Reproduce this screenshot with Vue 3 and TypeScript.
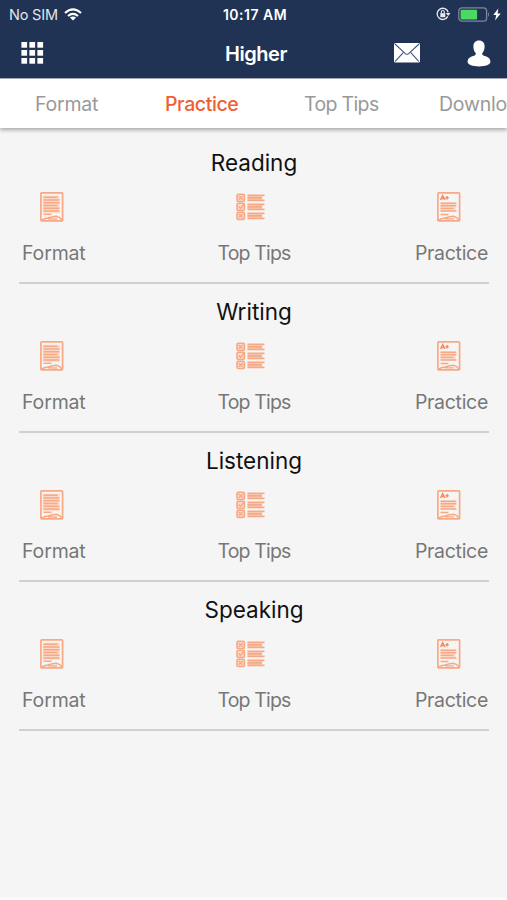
<script setup lang="ts">
interface Tab {
  label: string
  id: string
}

const tabs: Tab[] = [
  { label: 'Format', id: 'format' },
  { label: 'Practice', id: 'practice' },
  { label: 'Top Tips', id: 'tips' },
  { label: 'Downloads', id: 'downloads' },
]
const active = 'practice'
const sections: string[] = ['Reading', 'Writing', 'Listening', 'Speaking']
const cells = [0, 8, 16]
</script>

<template>
  <div class="screen">
    <header class="header">
      <div class="status">
        <div class="carrier">
          <span class="sim">No SIM</span>
          <svg class="wifi" width="18" height="13" viewBox="0 0 18 13" fill="none" stroke="#fff" stroke-width="2.1">
            <path d="M1 5Q9-2.2 17 5M4 8Q9 3.7 14 8" />
            <path d="M9 12.5 5.9 9.6Q9 7.2 12.1 9.6Z" fill="#fff" stroke="none" />
          </svg>
        </div>
        <span class="clock">10:17 AM</span>
        <div class="indicators">
          <svg width="15" height="14" viewBox="0 0 15 14" fill="none" stroke="#e7eaf0">
            <path d="M11.8 9.4A5.6 5.6 0 1 1 12.2 5.4" stroke-width="1.3" />
            <path d="M9.8 6.1h4.7l-2.3 3Z" fill="#e7eaf0" stroke="none" />
            <path d="M4.3 6.2h5v4h-5Z" fill="#e7eaf0" stroke="none" />
            <path d="M5.3 6.5V5a1.5 1.5 0 0 1 3 0v1.5" stroke-width="1.1" />
          </svg>
          <svg class="battery" width="33" height="15" viewBox="0 0 33 15">
            <rect x=".8" y=".8" width="27.8" height="13.4" rx="3.2" fill="none" stroke="#7c879c" stroke-width="1.3" />
            <rect x="2.6" y="2.7" width="16.5" height="9.7" rx="1" fill="#4bd863" />
            <path d="M30 5q2 2.5 0 5Z" fill="#7c879c" />
          </svg>
          <svg width="8" height="13" viewBox="0 0 8 13">
            <path d="M5.3.5.3 7h3L2 12.5 7.7 5.4H4.6Z" fill="#fff" />
          </svg>
        </div>
      </div>
      <div class="toolbar">
        <svg class="grid-icon" width="23" height="22" viewBox="0 0 23 22" fill="#fff">
          <template v-for="y in cells" :key="y">
            <rect v-for="x in cells" :key="x" :x="x + 0.4" :y="y" width="5.7" height="5.7" />
          </template>
        </svg>
        <h1 class="title">Higher</h1>
        <div class="actions">
          <svg width="26" height="20" viewBox="0 0 26 20">
            <rect x="0" y="0" width="26" height="19.5" rx="1.5" fill="#fff" />
            <path d="m1 1 10.3 9.6q1.7 1.4 3.4 0L25 1M1.2 18.3l8-8.6M24.8 18.3l-8-8.6" fill="none" stroke="#42577a" stroke-width="1.1" />
          </svg>
          <svg width="24" height="27" viewBox="0 0 24 27">
            <path d="M12 .5c3.5 0 5.6 2.3 5.6 5.7 0 2.7-.7 4.9-2 6.6-.8 1-.6 2.1.7 2.6l3.1 1.2c2.6 1 4 2.8 4 5.1 0 2.9-5.1 4.7-11.4 4.7S.6 24.6.6 21.7c0-2.3 1.4-4.1 4-5.1l3.1-1.2c1.3-.5 1.5-1.6.7-2.6-1.3-1.7-2-3.9-2-6.6C6.4 2.8 8.5.5 12 .5Z" fill="#fff" />
          </svg>
        </div>
      </div>
    </header>

    <nav class="tabs">
      <span v-for="tab in tabs" :key="tab.id" class="tab" :class="[tab.id, { active: tab.id === active }]">{{ tab.label }}</span>
    </nav>

    <main class="content">
      <section v-for="name in sections" :key="name" class="section">
        <h2 class="heading">{{ name }}</h2>
        <div class="options">
          <div class="option left">
            <svg class="icon" width="24" height="30" viewBox="0 0 24 30" fill="none" stroke="#f7a985">
              <rect x="2.6" y="3.800" width="17" height="17" fill="#fbd9c9" stroke="none" />
              <rect x=".9" y=".9" width="21.7" height="28" rx=".8" stroke-width="1.7" />
              <path d="M3.500 5.200h14M3.500 8h16M3.500 10.700h16M3.500 13.500h14M3.500 16.200h16M3.500 19h16M3.500 22.300h8" stroke-width="1.5" />
              <path d="M1.500 28.200Q4 26.500 8 26Q13 24.500 16.500 24.200Q20 25 22 28M8 26.700l9 .2" stroke-width="1.500" />
            </svg>
            <span class="label format-label">Format</span>
          </div>
          <div class="option middle">
            <svg class="icon" width="30" height="28" viewBox="0 0 30 28" fill="none" stroke="#f7a985">
              <g v-for="(y, i) in [0.8, 9.8, 18.8]" :key="y" :transform="`translate(0 ${y})`">
                <rect x="1" y=".5" width="7.4" height="7.2" rx="1.2" fill="#fbd9c9" stroke-width="1.6" />
                <path v-if="i !== 1" d="m2.8 2.200 3.800 3.800m0-3.800L2.800 6" stroke-width="1.4" />
                <path v-else d="m2.800 3.800 1.700 1.800L8.800.5" stroke-width="1.4" />
                <path d="M11.500 4h14.500" stroke="#fbd0bc" stroke-width="5" />
                <path d="M11.500 1.500h17M11.500 4h14.500M11.500 6.600h17" stroke-width="1.7" />
              </g>
            </svg>
            <span class="label tips-label">Top Tips</span>
          </div>
          <div class="option right">
            <svg class="icon" width="24" height="30" viewBox="0 0 24 30" fill="none" stroke="#f7a985">
              <rect x="3.500" y="10.500" width="15" height="9" fill="#fbd9c9" stroke="none" />
              <rect x=".9" y=".9" width="21.7" height="28" rx=".8" stroke-width="1.7" />
              <path d="m3.500 8 2.200-4.500L8 8M4.500 6.500h2.700M8.500 5.700h3.200M10.100 4v3.400" stroke="#f28b62" stroke-width="1.4" />
              <path d="M3.500 11.200h16M3.500 13.800h16M3.500 16.400h13M3.500 19h16M3.500 22.500h8" stroke-width="1.4" />
              <path d="M1.500 28.200Q4 26.500 8 26Q13 24.500 16.500 24.200Q20 25 22 28M8 26.700l9 .2" stroke-width="1.400" />
            </svg>
            <span class="label practice-label">Practice</span>
          </div>
        </div>
      </section>
    </main>
  </div>
</template>

<style>
body {
  margin: 0;
  background: #fff;
}
</style>

<style scoped>
.screen {
  width: 507px;
  height: 898px;
  overflow: hidden;
  background: #f5f5f5;
  font-family: Inter, "Liberation Sans", sans-serif;
}

.header {
  height: 78px;
  background: #203354;
  color: #fff;
  border-bottom: 1px solid #a9b0bb;
}

.status {
  display: grid;
  grid-template-columns: 1fr auto 1fr;
  align-items: center;
  height: 28px;
  padding: 0 6px 0 9px;
  font-size: 14.5px;
}

.carrier {
  display: flex;
  align-items: center;
  gap: 6px;
  color: #e2e5ea;
}

.sim {
  letter-spacing: -0.2px;
}

.clock {
  font-weight: 600;
  font-size: 14px;
  letter-spacing: 0.5px;
}

.indicators {
  display: flex;
  align-items: center;
  justify-content: flex-end;
}

.battery {
  margin: 0 2px 0 7px;
}

.toolbar {
  display: grid;
  grid-template-columns: 1fr auto 1fr;
  align-items: center;
  height: 50px;
  padding: 0 16px 0 21px;
}

.title {
  margin: 2px 0 0;
  font-size: 20px;
  line-height: 26px;
  font-weight: 600;
  letter-spacing: -0.45px;
}

.actions {
  display: flex;
  align-items: center;
  justify-content: flex-end;
  gap: 47px;
}

.tabs {
  position: relative;
  display: flex;
  height: 49px;
  box-sizing: border-box;
  padding-left: 35px;
  align-items: center;
  background: #fff;
  box-shadow: 0 2px 4px rgba(0, 0, 0, 0.32);
  font-size: 19.5px;
  letter-spacing: -0.2px;
  white-space: nowrap;
  color: #999;
}

.tab {
  flex: none;
  padding-top: 1px;
}

.format {
  width: 130px;
}

.practice {
  width: 139px;
}

.tips {
  width: 135px;
  letter-spacing: -0.65px;
}

.active {
  color: #ee6034;
  font-weight: 500;
  letter-spacing: -0.4px;
}

.content {
  padding: 7px 18px 0 19px;
}

.section {
  height: 149px;
  box-sizing: border-box;
  border-bottom: 2px solid #d0d0d0;
}

.heading {
  margin: 0;
  padding-top: 14px;
  font-size: 22.5px;
  line-height: 28px;
  font-weight: 400;
  color: #111;
  text-align: center;
}

.options {
  display: grid;
  grid-template-columns: 1fr 1fr 1fr;
  padding-top: 15px;
}

.option {
  display: flex;
  flex-direction: column;
}

.icon {
  display: block;
  height: 30px;
}

.label {
  margin-top: 19px;
  font-size: 19.5px;
  line-height: 24px;
  color: #777;
}

.format-label {
  letter-spacing: -0.15px;
}

.tips-label {
  letter-spacing: -0.85px;
}

.practice-label {
  letter-spacing: -0.3px;
  padding-right: 1px;
}

.left {
  padding-left: 3px;
}

.left .icon {
  margin-left: 18px;
}

.middle {
  align-items: center;
}

.middle .icon {
  margin-right: 6px;
}

.right {
  align-items: flex-end;
}

.right .icon {
  margin-right: 28px;
}
</style>
